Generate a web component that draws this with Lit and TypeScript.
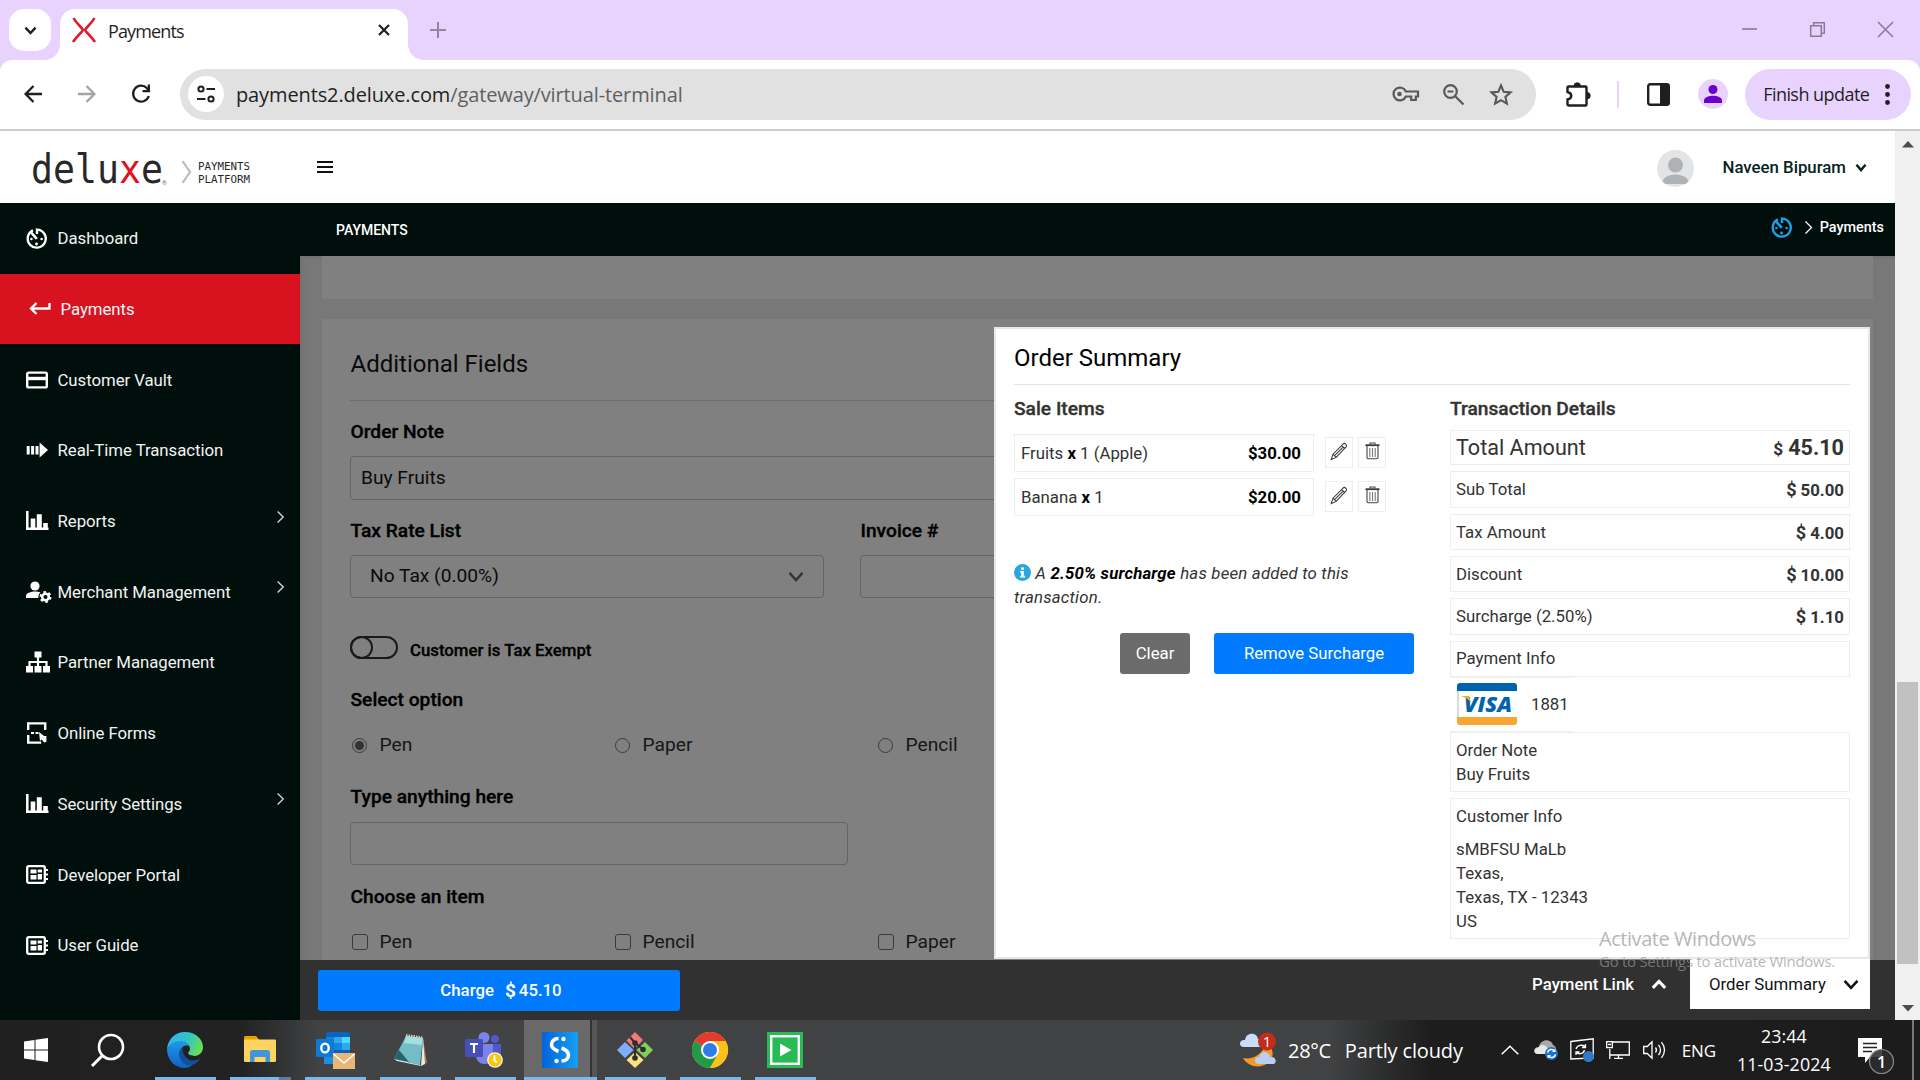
import { LitElement, html, css, svg, nothing } from "lit";
import { customElement } from "lit/decorators.js";
import { classMap } from "lit/directives/class-map.js";

const icon = (cls: string, w: number, h: number, body: unknown) =>
  html`<svg class=${cls} width=${w} height=${h} viewBox="0 0 ${w} ${h}" fill="none">${body}</svg>`;

const gauge = svg`<path d="M7 2.400A9 9 0 1 0 11 1.600V6" stroke="currentColor" stroke-width="2.400"/><path d="M4.800 4.200 10.800 10.800" stroke="currentColor" stroke-width="2.600"/><circle cx="5.400" cy="11" r="1.300" fill="currentColor"/><circle cx="15.600" cy="11" r="1.300" fill="currentColor"/><circle cx="10.500" cy="16" r="1.400" fill="currentColor"/>`;
const bars = svg`<path d="M1.300 0V19M0 17.800H22.500" stroke="currentColor" stroke-width="2.500"/><path d="M4.700 7.500h4.600V18H4.700zM10.800 3.200h5V18h-5zM17.200 12h4.600v6h-4.600z" fill="currentColor"/>`;
const board = svg`<rect x="1.200" y="1.200" width="17.600" height="16.600" rx="1.500" stroke="currentColor" stroke-width="2.300"/><path d="M4.500 4.500h6v4h-6zM4.500 10h6v4.500h-6zM11.700 4.500h4.300v3h-4.300zM11.700 9h4.300v5.500h-4.300z" fill="currentColor"/><path d="M19 5h3M19 9.500h3M19 14h3" stroke="currentColor" stroke-width="2.200"/>`;

const NAV = [
  { label: "Dashboard", art: icon("ni", 21, 21, gauge) },
  { label: "Payments", active: true, art: icon("ni", 22, 14, svg`<path d="M20.500 1v5.500H2M7.500 1 2 6.500 7.500 12" stroke="currentColor" stroke-width="2.300"/>`) },
  { label: "Customer Vault", art: icon("ni", 22, 18, svg`<rect x="1.200" y="1.600" width="19.600" height="14.800" rx="1.500" stroke="currentColor" stroke-width="2.400"/><path d="M1 5.800h20v3.400H1z" fill="currentColor"/>`) },
  { label: "Real-Time Transaction", art: icon("ni", 22, 16, svg`<path d="M2.200 4v8.500M6.600 4v8.500M11 4v8.500" stroke="currentColor" stroke-width="3"/><path d="M13.600.5 22 8l-8.400 7.500z" fill="currentColor"/>`) },
  { label: "Reports", more: true, art: icon("ni", 22, 20, bars) },
  { label: "Merchant Management", more: true, art: icon("ni", 26, 22, svg`<circle cx="9" cy="5" r="4.600" fill="currentColor"/><path d="M0 17v-2c0-3 5-4.500 9-4.500 2 0 4 .4 5.500 1-1.800 1.400-2.500 3.500-2 5.500z" fill="currentColor"/><circle cx="19.500" cy="16" r="3.300" stroke="currentColor" stroke-width="2.500"/><circle cx="19.500" cy="16" r="5" stroke="currentColor" stroke-width="2" stroke-dasharray="2.600 2.600"/>`) },
  { label: "Partner Management", art: icon("ni", 24, 22, svg`<path d="M8.500.5h7v6h-7zM0 15h7v6.500H0zM8.500 15h7v6.500h-7zM17 15h7v6.500h-7z" fill="currentColor"/><path d="M12 6v10M3.500 16v-5h17v5" stroke="currentColor" stroke-width="2.200"/>`) },
  { label: "Online Forms", art: icon("ni", 22, 22, svg`<path d="M2.200 8V1.400h17V8M2.200 13v7.600h13M19.200 14v6" stroke="currentColor" stroke-width="2.400"/><path d="M5 11h3M9.500 11h3" stroke="currentColor" stroke-width="2"/><path d="m13 10 7 5.500-2.600.4 2.800 3.200-1.800 1.700-2.800-3.400L14 19z" fill="currentColor"/>`) },
  { label: "Security Settings", more: true, art: icon("ni", 22, 20, bars) },
  { label: "Developer Portal", art: icon("ni", 22, 19, board) },
  { label: "User Guide", art: icon("ni", 22, 19, board) },
];

const chev = (cls: string, w: number, h: number, sw: number) =>
  icon(cls, w, h, svg`<path d="M${sw * 0.6} ${sw * 0.7} ${w / 2} ${h - sw * 0.8} ${w - sw * 0.6} ${sw * 0.7}" stroke="currentColor" stroke-width=${sw}/>`);

const pencil = icon("", 18, 19, svg`<path d="M1.200 17.500 3 12.200 13.300 1.800c1.200-1.200 4.200 1.300 3 2.800L6.200 15.400zM3 12.200l3.200 3.200M11.600 3.600l3.200 3M4.600 13.600 13.400 4.800" stroke="#383838" stroke-width="1.050"/>`);
const trash = icon("", 15, 18, svg`<path d="M.5 3.200h14" stroke="#3a3a3a" stroke-width="1.800"/><path d="M5 2.400V1h5v1.400M2 4v11.500c0 .8.500 1.200 1.200 1.200h8.600c.7 0 1.200-.4 1.200-1.200V4" stroke="#444" stroke-width="1.100"/><path d="M4.800 6v9M7.500 6v9M10.200 6v9" stroke="#777" stroke-width="1.100"/>`);

const TOTALS = [
  { label: "Total Amount", value: "45.10", cls: "t0" },
  { label: "Sub Total", value: "50.00", cls: "t1" },
  { label: "Tax Amount", value: "4.00", cls: "t2" },
  { label: "Discount", value: "10.00", cls: "t2" },
  { label: "Surcharge (2.50%)", value: "1.10", cls: "t1" },
];

const APPS = [
  { art: icon("", 36, 36, svg`<defs><linearGradient id="ea" x1="0" y1=".3" x2="1" y2=".6"><stop offset="0" stop-color="#35b5ee"/><stop offset=".5" stop-color="#2fc3c9"/><stop offset="1" stop-color="#6ce04c"/></linearGradient><linearGradient id="eb" x1="0" y1="0" x2="0" y2="1"><stop offset="0" stop-color="#1f9ae8"/><stop offset="1" stop-color="#0f62c4"/></linearGradient></defs><path d="M0 17C1 7 8 0 18 0c11 0 18 7.500 18 15 0 5.500-4 9-8.500 9-4 0-6.300-1.500-6.300-2.900 0-1 1.800-1.700 1.800-4.600 0-3-3-5.500-7-5.500-7 0-13 3-16 6z" fill="url(#ea)"/><path d="M0 17c2-5 7-8 13-8 4.500 0 8 1.500 9.500 5-6-2-10 2.500-9 8 1 6.500 6 10 12 11-2.500 2-5 3-8 3C8 36 0 28 0 17z" fill="url(#eb)"/><path d="M16 15c-4.500 2-5 8-2.500 12.500C16 32 21 34.500 26 32.800c3-1.100 5.500-3.300 7.200-6C30 28.500 25 29.500 21 27c-4-2.500-6-7-5-12z" fill="#124f9c"/>`) },
  { art: icon("", 32, 30, svg`<path d="M0 2.500C0 1.700.6 1 1.400 1H12l3 3.500V8H0z" fill="#e8a200"/><rect y="4.500" width="32" height="22.500" rx="1.200" fill="#ffd35e"/><path d="M6 27V17.500c0-1.500 1-2.500 2.500-2.500h15c1.500 0 2.500 1 2.500 2.500V27h-4.500v-5h-11v5z" fill="#3e96df"/>`), cls: "split" },
  { art: icon("", 39, 37, svg`<rect x="10" y="0" width="24" height="32" rx="2" fill="#0a63bd"/><path d="M10 5h8v6h-8z" fill="#1384dc"/><path d="M18 5h8v6h-8z" fill="#2fa9ee"/><path d="M26 5h8v6h-8z" fill="#4fd8ff"/><path d="M18 11h8v7h-8z" fill="#1684dc"/><path d="M26 11h8v7h-8z" fill="#2ea8ee"/><path d="M8 22h12v10H8z" fill="#1a8fe0"/><rect y="7" width="18" height="18" rx="1.500" fill="#0f7ad4"/><ellipse cx="9" cy="16" rx="3.700" ry="4.400" stroke="#fff" stroke-width="2.400"/><path d="M17 21h22v16H17z" fill="#eab676"/><path d="m17.500 22 10.500 9 10.500-9" stroke="#fff" stroke-width="1.600"/>`) },
  { art: icon("", 33, 33, svg`<path d="m29 4 4 25-4 1z" fill="#b07a3a"/><path d="M29 4 31 30l-4 2z" fill="#e6ecee"/><path d="M12 2 29 4l-3 27L0 25z" fill="#74bcc6"/><path d="M12 2 29 4l-1 7-18-2z" fill="#a5dfe4"/><path d="M5 16 0 25l15 3z" fill="#27636c"/><path d="M0 25l26 6 1 1-24-5z" fill="#dfe8ea"/><path d="M12 1.500 29 4" stroke="#ccc" stroke-width="3" stroke-dasharray="1.500 1"/>`) },
  { art: icon("", 40, 36, svg`<circle cx="19" cy="5.500" r="5.500" fill="#7b83eb"/><circle cx="30" cy="7" r="4" fill="#5059c9"/><path d="M24 12h12v8c0 5-4 7-7 7z" fill="#5059c9"/><path d="M11 12h17v11c0 6-4 9-8.500 9S11 29 11 23z" fill="#7b83eb"/><rect y="7" width="18" height="18" rx="1.500" fill="#464eb8"/><path d="M5 12h8M9 12v9" stroke="#fff" stroke-width="2.200"/><circle cx="30" cy="28" r="7.800" fill="#fff"/><circle cx="30" cy="28" r="6.700" fill="#f9c80e"/><path d="M29.500 23.500v5l2.500 2" stroke="#fff" stroke-width="2"/>`) },
  { art: icon("", 36, 36, svg`<defs><linearGradient id="sa" x1="0" y1="0" x2="1" y2="0"><stop offset="0" stop-color="#0163dc"/><stop offset="1" stop-color="#16a0f0"/></linearGradient></defs><path d="M0 0h36v36H0z" fill="url(#sa)"/><path d="M16.500 6.500c-4.500 0-7 3-7 6s2 5 7 7M19.500 16c5 2 7 4 7 7s-2.500 6-7 6" stroke="#fff" stroke-width="3.600"/><circle cx="21.500" cy="7" r="2.200" fill="#fff"/><circle cx="14.500" cy="29" r="2.200" fill="#fff"/>`), cls: "current" },
  { art: icon("", 36, 36, svg`<path d="m18 0 8 8-8.500 9L9.500 8.500z" fill="#f4797b"/><path d="m28 10 8 8-8 8-8.500-8z" fill="#82cf5c"/><path d="m8 10 8.500 8L8 26l-8-8z" fill="#7cb0fb"/><path d="m18 20 8.500 8L18 36l-8.500-8z" fill="#fbe27c"/><path d="M13 5l5 6v15M18 11l9 7" stroke="#2c2f31" stroke-width="2"/><circle cx="18" cy="11" r="2.800" fill="#2c2f31"/><circle cx="26" cy="17.500" r="2.800" fill="#2c2f31"/><circle cx="18" cy="26" r="2.800" fill="#2c2f31"/>`) },
  { art: icon("", 36, 36, svg`<circle cx="18" cy="18" r="18" fill="#fbc116"/><path d="M18 18 2.400 9A18 18 0 0 1 33.600 9H18z" fill="#e33b2e"/><path d="M2.400 9A18 18 0 0 0 18 36l7.800-13.500L18 18z" fill="#229a49"/><path d="M33.600 9H18v9l7.800 4.500L18 36A18 18 0 0 0 33.600 9z" fill="#fcc21b"/><circle cx="18" cy="18" r="9" fill="#fff"/><circle cx="18" cy="18" r="7" fill="#2f7bea"/>`) },
  { art: icon("", 36, 36, svg`<path d="M0 0h36v36H0z" fill="#27bb53"/><rect x="4.200" y="4.200" width="27.600" height="27.600" stroke="#fff" stroke-width="2.400"/><path d="M13 11.500 24.500 18 13 24.500z" fill="#fff"/>`) },
];

@customElement("app-root")
export class AppRoot extends LitElement {
  static styles = css`
    :host { display: block; width: 1920px; height: 1080px; overflow: hidden; position: relative; background: #fff; color: #333; font-family: Roboto, "Liberation Sans", sans-serif; font-size: 16.800px; }
    * { box-sizing: border-box; }
    svg { display: block; flex: none; overflow: visible; }
    .ui { font-family: "Open Sans", "Noto Sans", sans-serif; white-space: nowrap; }
    .tabs { height: 60px; background: #e8d3ff; display: flex; align-items: flex-start; padding: 9px 0 0 9px; color: #1f1f1f; }
    .search { width: 42px; height: 42px; border-radius: 15px; background: #fff; display: flex; align-items: center; justify-content: center; margin-right: 9px; }
    .tab { width: 348px; height: 51px; background: #fff; border-radius: 15px 15px 0 0; padding: 0 18px 10px 12px; display: flex; align-items: center; position: relative; }
    .tab::before, .tab::after { content: ""; position: absolute; bottom: 0; width: 15px; height: 15px; }
    .tab::before { left: -15px; background: radial-gradient(circle at 0 0, transparent 14.5px, #fff 15px); }
    .tab::after { right: -15px; background: radial-gradient(circle at 100% 0, transparent 14.5px, #fff 15px); }
    .tab .name { margin-left: 12px; flex: 1; font-size: 18px; letter-spacing: -.86px; padding-top: 2px; }
    .plus { margin: 13px 0 0 22px; }
    .win { margin: 13px 27px 0 auto; display: flex; gap: 53px; color: #857b92; }
    .corners { background: #e8d3ff; }
    .tools { height: 71px; background: #fff; border-bottom: 2px solid #ccc; border-radius: 12px 12px 0 0; display: flex; align-items: center; padding: 0 9px 1px 24px; color: #1f1f1f; }
    .fwd { margin-left: 36px; color: #a3a3a3; }
    .rel { margin-left: 35px; }
    .omni { margin-left: 29px; width: 1358px; height: 51px; border-radius: 26px; background: #e1e1e1; display: flex; align-items: center; padding-left: 8px; }
    .site-info { width: 36px; height: 36px; border-radius: 50%; background: #fff; display: flex; align-items: center; justify-content: center; }
    .url { margin-left: 12px; font-size: 20px; letter-spacing: -.12px; flex: 1; }
    .url i { font-style: normal; color: #5f6062; }
    .omni svg.o { color: #57585a; }
    .o2 { margin-left: 24px; }
    .o3 { margin: 0 23px 0 25px; }
    .ext { margin-left: 30px; }
    .sep { width: 2px; height: 27px; background: #e8d3ff; margin-left: 26px; }
    .side { margin-left: 28px; }
    .me { width: 30px; height: 30px; border-radius: 50%; background: #e8d3ff; margin-left: 28px; display: flex; justify-content: center; align-items: center; }
    .finish { margin-left: 17px; width: 166px; height: 51px; border-radius: 26px; background: #e8d3ff; display: flex; align-items: center; justify-content: space-between; padding: 0 21px 0 18px; font-size: 18px; letter-spacing: -.55px; }
    .page { display: flex; height: 889px; position: relative; }
    .site { width: 1895px; }
    .head { height: 72px; display: flex; align-items: center; padding-left: 31px; }
    .logo { font-family: "DejaVu Sans Mono", monospace; font-size: 36.500px; line-height: 40px; height: 40px; color: #26282a; transform: scaleY(1.1); margin-top: 5px; width: 131px; }
    .logo b { font-weight: 400; color: #df1021; }
    .reg { font-size: 6px; color: #666; margin-top: 30px; width: 5px; }
    .ang { margin: 9px 0 0 14px; }
    .plat { font-family: "DejaVu Sans Mono", monospace; font-size: 10.800px; line-height: 13px; color: #26282a; margin: 11px 0 0 6px; width: 119px; }
    .avatar { margin-left: auto; margin-top: 2px; }
    .user { margin-left: 29px; font-size: 16.800px; font-weight: 500; color: #06231d; display: flex; align-items: center; gap: 9px; margin-right: 28px; }
    .body { display: flex; height: 817px; }
    .nav { width: 300px; background: #000f0b; color: #fff; }
    .nav div { height: 70.7px; display: flex; align-items: center; padding: 0 16px 0 25.5px; font-size: 16.800px; letter-spacing: -.05px; }
    .nav div.active { background: #d71320; padding-left: 28.5px; }
    .nav .slot { width: 32px; }
    .nav .lbl { flex: 1; color: #f2f3f3; }
    .nav .go { margin-bottom: 9px; }
    .main { width: 1595px; }
    .crumb { height: 53px; background: #000f0b; color: #fff; display: flex; align-items: center; padding: 0 11px 0 36px; font-size: 14.400px; font-weight: 500; }
    .crumb .ttl { flex: 1; font-size: 14px; padding-top: 1px; }
    .crumb .g { color: #1da0e8; margin-bottom: 5px; }
    .crumb .c { margin: 0 8px 5px 13px; }
    .crumb .p { margin-bottom: 5px; }
    .content { height: 704px; background: #787878; overflow: hidden; padding-left: 22px; box-shadow: inset 6px 0 5px -4px #6f6f6f, inset 0 3px 3px -2px #707070; }
    .prev { width: 1551px; height: 43px; background: #808080; margin-bottom: 20px; }
    .card { width: 1551px; height: 700px; background: #808080; padding: 9px 28px 0; color: #000; }
    .h { height: 72px; line-height: 72px; font-size: 24px; color: #0a0a0a; padding-left: .5px; }
    .hr { height: 1px; background: #6e6e6e; }
    .l { font-size: 19.200px; font-weight: 500; line-height: 55px; height: 55px; padding: 3px 0 0 .5px; -webkit-text-stroke: .35px #000; }
    .l2 { height: 41px; line-height: 41px; margin-top: 20px; padding-top: 0; }
    .l3 { height: 52px; line-height: 52px; padding-top: 1px; }
    .l4 { height: 63px; line-height: 63px; padding-top: 0; }
    .in { border: 1px solid #646464; border-radius: 4px; height: 44px; line-height: 41px; font-size: 19.200px; padding-left: 10px; color: #0a0a0a; }
    .s { height: 43px; }
    .short { width: 498px; }
    .cols { display: grid; grid-template-columns: 474px 474px; column-gap: 36px; }
    .sel { display: flex; align-items: center; justify-content: space-between; padding: 0 19px 3px 19px; }
    .sel svg { color: #333; margin-top: 3px; }
    .tog { height: 23px; margin-top: 38px; display: flex; align-items: center; gap: 12px; font-size: 16.800px; font-weight: 500; -webkit-text-stroke: .3px #000; }
    .switch { width: 48px; height: 23px; border: 2px solid #1a1a1a; border-radius: 12px; }
    .knob { width: 23px; height: 23px; margin: -2px; border: 2px solid #1a1a1a; border-radius: 50%; }
    .tog span { padding-top: 5px; }
    .opts { display: grid; grid-template-columns: 263px 263px 263px; color: #161616; font-size: 19.200px; align-items: center; }
    .o-r { height: 50px; padding-bottom: 1px; }
    .o-c { height: 26px; }
    .opts div { display: flex; align-items: center; gap: 12.5px; padding-left: 2px; }
    .radio { width: 15px; height: 15px; border: 1.5px solid #3b3b3b; border-radius: 50%; display: flex; align-items: center; justify-content: center; margin-top: 2px; }
    .radio.on::after { content: ""; width: 9px; height: 9px; border-radius: 50%; background: #303438; }
    .box { width: 16px; height: 16px; border: 1.5px solid #3b3b3b; border-radius: 3px; margin: 1px -1px 0 0; }
    .foot { height: 60px; background: #313131; display: flex; align-items: flex-start; padding-left: 18px; color: #fff; font-weight: 500; }
    .charge { margin-top: 10px; width: 362px; height: 41px; border-radius: 3px; background: #007bff; display: flex; align-items: center; justify-content: center; font-size: 16.800px; padding-left: 4px; padding-bottom: 1px; }
    .charge b { margin: 0 3px 0 11px; font-size: 19px; }
    .plink { margin-left: auto; height: 48px; display: flex; align-items: center; gap: 17px; margin-right: 23px; font-size: 16.800px; }
    .osum { width: 180px; height: 50px; margin-top: -1px; margin-right: 25px; background: #fff; color: #111; display: flex; align-items: center; justify-content: space-between; padding: 0 11px 0 19px; font-size: 16.800px; font-weight: 400; }
    .up { transform: rotate(180deg); }
    .scroll { width: 25px; background: #f0f0f0; display: flex; flex-direction: column; align-items: center; padding: 10px 0 8px; }
    .thumb { width: 21px; height: 282px; background: #c1c1c1; margin: 534px 0 auto; }
    .modal { position: absolute; left: 994px; top: 196px; width: 876px; height: 632px; background: #fff; border: 2px solid #e4e9ee; padding: 0 18px; }
    .modal h2 { margin: 0; font-size: 24px; font-weight: 400; color: #000; height: 56px; line-height: 58px; border-bottom: 1px solid #e3e3e3; }
    .split { display: flex; }
    .left { width: 436px; }
    .right { width: 400px; }
    h3 { margin: 0; font-size: 19.200px; line-height: 45px; height: 45px; padding-top: 1px; font-weight: 500; color: #333; -webkit-text-stroke: .35px #333; }
    .left h3 { height: 49px; }
    .item { display: flex; align-items: center; height: 38px; margin-bottom: 6px; }
    .cell { width: 300px; height: 38px; border: 1px solid #ededed; padding: 0 12px 0 6px; display: flex; justify-content: space-between; align-items: center; margin-right: 11px; }
    .cell b, .note b { color: #000; }
    .act { width: 28px; height: 31px; border: 1px solid #ededed; margin: 0 5px 1px 0; display: flex; align-items: center; justify-content: center; }
    .act svg { margin-bottom: 3px; }
    .note { margin: 44px 0 0; width: 370px; font-style: italic; line-height: 24px; padding-top: 1px; letter-spacing: .2px; }
    .note svg { display: inline-block; vertical-align: -2px; }
    .btns { display: flex; gap: 24px; margin: 24px 0 0 106px; color: #fff; }
    .btns div { height: 41px; border-radius: 3px; display: flex; align-items: center; justify-content: center; padding-bottom: 1px; }
    .clear { width: 70px; background: #6b6b6b; }
    .rem { width: 200px; background: #007bff; }
    .t { border: 1px solid #ededed; padding: 0 5px; display: flex; align-items: center; justify-content: space-between; margin-bottom: 6px; }
    .t b { font-weight: 700; }
    .t i { font-style: normal; font-size: 1.080em; margin-right: 4px; }
    .t0 { height: 35px; font-size: 21.600px; }
    .t0 i { font-size: .8em; margin-right: 5px; }
    .t1 { height: 37px; padding-bottom: 1px; }
    .t2 { height: 36px; }
    .t.pay { height: 36px; margin: 0; padding-bottom: 2px; }
    .card-row { height: 55px; width: 124px; display: flex; align-items: center; gap: 14px; padding: 0 0 1px 7px; border: 1px solid #f2f2f2; border-width: 1px 0; }
    .blk { border: 1px solid #ededed; padding: 5px 5px 0; line-height: 24px; height: 60px; margin-bottom: 6px; }
    .blk.c { height: 141px; margin: 0; }
    .blk.c p { margin: 9px 0 0; }
    .wm { position: absolute; left: 1599px; top: 923px; color: rgba(150,150,150,.7); line-height: 32px; font-size: 20px; letter-spacing: -.45px; }
    .wm div + div { font-size: 15px; letter-spacing: -.28px; line-height: 16px; margin-top: -2px; }
    .task { height: 60px; background: linear-gradient(90deg, #202020 0, #222 240px, #414344 320px, #404243 1330px, #1d1d1d 1430px, #1c1c1c); display: flex; align-items: flex-start; color: #fff; padding-left: 24px; }
    .task > svg { align-self: center; }
    .find { margin-left: 43px; }
    .apps { display: flex; gap: 14px; margin-left: 31px; }
    .app { width: 61px; height: 60px; border-bottom: 3px solid #76b9ed; display: flex; align-items: center; justify-content: center; padding: 3px 1px 0 0; }
    .app.split { border-image: linear-gradient(90deg, #76b9ed 77%, #587fa1 77%) 3; border-style: solid; border-width: 0 0 3px; }
    .app.current { width: 73px; margin: 0 -6px; background: linear-gradient(90deg, #696969 66px, #333 66px, #333 68px, #565656 68px); }
    .tray { display: flex; align-items: center; height: 60px; flex: 1; }
    .wico { margin-left: 424px; }
    .wx { margin-left: 12px; font-size: 20px; letter-spacing: -.3px; }
    .wx2 { margin-left: 14px; font-size: 20px; letter-spacing: -.15px; }
    .k1 { margin-left: 38px; }
    .k2 { margin-left: 15px; }
    .k3, .k4 { margin-left: 12px; }
    .k5 { margin-left: 13px; }
    .eng { margin-left: 17px; font-size: 17px; letter-spacing: -.2px; width: 36px; }
    .clock { margin-left: 16px; width: 100px; text-align: center; font-size: 17.800px; line-height: 28px; letter-spacing: .1px; }
    .note-i { margin: 12px 0 0 24px; }
    .edge { width: 2px; height: 60px; background: #777; margin-left: 18px; }
  `;

  render() {
    return html`
      <div class="tabs">
        <div class="search">${chev("", 13, 9, 2.4)}</div>
        <div class="tab">
          ${icon("", 24, 24, svg`<path d="M1.500 0C5 6.500 10.800 10 10.800 12S5 17.500 1 24M22.500 0C19 6.500 13.200 10 13.200 12s5.800 5.500 9.800 12" stroke="#e01b2b" stroke-width="2.600"/>`)}
          <span class="name ui">Payments</span>
          ${icon("", 12, 12, svg`<path d="m1 1 10 10M11 1 1 11" stroke="#1f1f1f" stroke-width="2.200"/>`)}
        </div>
        ${icon("plus", 16, 16, svg`<path d="M8 0v16M0 8h16" stroke="#9086a0" stroke-width="2"/>`)}
        <div class="win">
          ${icon("", 15, 15, svg`<path d="M0 7h15" stroke="currentColor" stroke-width="1.600"/>`)}
          ${icon("", 15, 15, svg`<path d="M.7 3.700h10.600v10.600H.7zM3.700 3.500V.7h10.600v10.600h-2.800" stroke="currentColor" stroke-width="1.500"/>`)}
          ${icon("", 15, 15, svg`<path d="m0 0 15 15M15 0 0 15" stroke="currentColor" stroke-width="1.500"/>`)}
        </div>
      </div>
      <div class="corners"><div class="tools">
        ${icon("", 18, 18, svg`<path d="M18 9H2M9.500 1 1.600 9l7.900 8" stroke="currentColor" stroke-width="2.300"/>`)}
        ${icon("fwd", 18, 18, svg`<path d="M0 9h16M8.500 1l7.900 8-7.900 8" stroke="currentColor" stroke-width="2.300"/>`)}
        ${icon("rel", 20, 20, svg`<path d="M17.800 12A8 8 0 1 1 16 4.200L18 7" stroke="currentColor" stroke-width="2.300"/><path d="M19 .5V8.300h-7.500V6H16.700V.5z" fill="currentColor"/>`)}
        <div class="omni">
          <div class="site-info">${icon("", 18, 18, svg`<circle cx="4" cy="4" r="2.600" stroke="currentColor" stroke-width="2"/><circle cx="14" cy="14" r="2.600" stroke="currentColor" stroke-width="2"/><path d="M9.500 4H18M0 14h8.500" stroke="currentColor" stroke-width="2.200"/>`)}</div>
          <span class="url ui">payments2.deluxe.com<i>/gateway/virtual-terminal</i></span>
          ${icon("o", 27, 16, svg`<path d="M13.800 5.500H26v5h-2.200V14h-4.600v-3.500h-5.400a6.400 6.400 0 1 1 0-5z" stroke="currentColor" stroke-width="2.200"/><circle cx="7.500" cy="8" r="2.300" fill="currentColor"/>`)}
          ${icon("o o2", 21, 21, svg`<circle cx="7.500" cy="7.500" r="6.300" stroke="currentColor" stroke-width="2.200"/><path d="m12 12 8.500 8.500M4.500 7.500h6" stroke="currentColor" stroke-width="2.200"/>`)}
          ${icon("o o3", 24, 23, svg`<path d="m12 2.500 2.700 6.300 6.800.6-5.100 4.500 1.500 6.700L12 17.100l-5.900 3.500 1.500-6.700-5.100-4.500 6.800-.6z" stroke="currentColor" stroke-width="2.100"/>`)}
        </div>
        ${icon("ext", 25, 25, svg`<path d="M2.500 4.500H19.500q1 0 1 1V22q0 1.500-1 1.500H3q-1.500 0-1.500-1.500v-4.500c5-1 5-6.500 0-7.500V6q0-1.500 1-1.500z" stroke="currentColor" stroke-width="2.400"/><path d="M8 4a3.200 3.200 0 0 1 6.400 0zM21 10.500a3.200 3.200 0 0 1 0 6.400z" fill="currentColor" stroke="currentColor"/>`)}
        <div class="sep"></div>
        ${icon("side", 23, 23, svg`<rect x="1.200" y="1.200" width="20.600" height="20.600" rx="2" stroke="currentColor" stroke-width="2.400"/><path d="M13 1h9v21h-9z" fill="currentColor"/>`)}
        <div class="me">${icon("", 18, 18, svg`<circle cx="9" cy="4.500" r="4.500" fill="#6a00d0"/><path d="M0 18v-2.500C0 12 6 10.800 9 10.800s9 1.200 9 4.700V18z" fill="#6a00d0"/>`)}</div>
        <div class="finish ui"><span>Finish update</span>${icon("", 5, 21, svg`<circle cx="2.500" cy="2.500" r="2.400" fill="currentColor"/><circle cx="2.500" cy="10.500" r="2.400" fill="currentColor"/><circle cx="2.500" cy="18.500" r="2.400" fill="currentColor"/>`)}</div>
      </div></div>
      <div class="page">
        <div class="site">
          <div class="head">
            <div class="logo">delu<b>x</b>e</div><span class="reg">®</span>
            ${icon("ang", 11, 22, svg`<path d="M1.500 0 9 11 1.500 22" stroke="#b9bbbc" stroke-width="2.200"/>`)}
            <div class="plat">PAYMENTS<br />PLATFORM</div>
            ${icon("", 16, 14, svg`<path d="M0 2h16M0 7h16M0 12h16" stroke="#111" stroke-width="2"/>`)}
            ${icon("avatar", 37, 37, svg`<defs><clipPath id="av"><circle cx="18.500" cy="18.500" r="18.500"/></clipPath></defs><g clip-path="url(#av)"><path d="M0 0h37v37H0z" fill="#e2e4e6"/><circle cx="18.500" cy="15" r="7.500" fill="#adb2b7"/><path d="M5 34c0-6 6-9.500 13.500-9.500S32 28 32 34z" fill="#adb2b7"/></g>`)}
            <div class="user">Naveen Bipuram ${chev("", 12, 9, 2.5)}</div>
          </div>
          <div class="body">
            <div class="nav">
              ${NAV.map((n) => html`<div class=${classMap({ active: !!n.active })}><span class="slot">${n.art}</span><span class="lbl">${n.label}</span>${n.more ? icon("go", 7, 12, svg`<path d="m.6.600 5.600 5.400L.6 11.400" stroke="#cfd3d2" stroke-width="1.400"/>`) : nothing}</div>`)}
            </div>
            <div class="main">
              <div class="crumb"><span class="ttl">PAYMENTS</span>${icon("g", 21, 21, gauge)}${icon("c", 7, 13, svg`<path d="m.5.500 6 6-6 6" stroke="#fff" stroke-width="1.300"/>`)}<span class="p">Payments</span></div>
              <div class="content">
                <div class="prev"></div>
                <div class="card">
                  <div class="h">Additional Fields</div>
                  <div class="hr"></div>
                  <div class="l">Order Note</div>
                  <div class="in">Buy Fruits</div>
                  <div class="cols">
                    <div><div class="l">Tax Rate List</div><div class="in s sel"><span>No Tax (0.00%)</span>${chev("", 16, 11, 2.4)}</div></div>
                    <div><div class="l">Invoice #</div><div class="in s"></div></div>
                  </div>
                  <div class="tog"><div class="switch"><div class="knob"></div></div><span>Customer is Tax Exempt</span></div>
                  <div class="l l2">Select option</div>
                  <div class="opts o-r">${["Pen", "Paper", "Pencil"].map((t, i) => html`<div><span class=${classMap({ radio: true, on: i === 0 })}></span>${t}</div>`)}</div>
                  <div class="l l3">Type anything here</div>
                  <div class="in s short"></div>
                  <div class="l l4">Choose an item</div>
                  <div class="opts o-c">${["Pen", "Pencil", "Paper"].map((t) => html`<div><span class="box"></span>${t}</div>`)}</div>
                </div>
              </div>
              <div class="foot">
                <div class="charge">Charge <b>$</b>45.10</div>
                <div class="plink">Payment Link ${chev("up", 16, 11, 3)}</div>
                <div class="osum">Order Summary ${chev("", 16, 11, 2.6)}</div>
              </div>
            </div>
          </div>
        </div>
        <div class="scroll">
          ${icon("", 12, 7, svg`<path d="M6 0l6 6.500H0z" fill="#4c4c4c"/>`)}
          <div class="thumb"></div>
          ${icon("", 12, 7, svg`<path d="M6 6.500 0 0h12z" fill="#4c4c4c"/>`)}
        </div>
        <div class="modal">
          <h2>Order Summary</h2>
          <div class="split">
            <div class="left">
              <h3>Sale Items</h3>
              <div class="item"><div class="cell"><span>Fruits <b>x</b> 1 (Apple)</span><b>$30.00</b></div><div class="act">${pencil}</div><div class="act">${trash}</div></div>
              <div class="item"><div class="cell"><span>Banana <b>x</b> 1</span><b>$20.00</b></div><div class="act">${pencil}</div><div class="act">${trash}</div></div>
              <div class="note">${icon("", 17, 17, svg`<circle cx="8.500" cy="8.500" r="8.500" fill="#2ba6e0"/><path d="M7 3.500h3v2.200H7zM6.200 7h3.600v4.800h1.200v1.700H6.200v-1.700h1V8.700h-1z" fill="#fff"/>`)} A <b>2.50% surcharge</b> has been added to this transaction.</div>
              <div class="btns"><div class="clear">Clear</div><div class="rem">Remove Surcharge</div></div>
            </div>
            <div class="right">
              <h3>Transaction Details</h3>
              ${TOTALS.map((t) => html`<div class="t ${t.cls}"><span>${t.label}</span><b><i>$</i>${t.value}</b></div>`)}
              <div class="t pay">Payment Info</div>
              <div class="card-row">
                ${icon("", 60, 42, svg`<rect width="60" height="42" rx="3" fill="#fff"/><path d="M0 8V3q0-3 3-3h54q3 0 3 3v5z" fill="#0063b0"/><path d="M0 34h60v5q0 3-3 3H3q-3 0-3-3z" fill="#f9a533"/><path d="M0 8h2v26H0z" fill="#d9d9d9"/><text x="7" y="28.500" textLength="48" lengthAdjust="spacingAndGlyphs" font-family="Open Sans, sans-serif" font-weight="800" font-style="italic" font-size="21.500" fill="#0063b0">VISA</text><path d="M4 13h8l2 6.500q-3-4.500-10-6.500z" fill="#f9a533"/>`)}
                <span>1881</span>
              </div>
              <div class="blk">Order Note<br />Buy Fruits</div>
              <div class="blk c">Customer Info<p>sMBFSU MaLb<br />Texas,<br />Texas, TX - 12343<br />US</p></div>
            </div>
          </div>
        </div>
      </div>
      <div class="task">
        ${icon("", 24, 24, svg`<path d="M0 3.500 10.500 2v9.500H0zM11.500 1.800 24 0v11.500H11.500zM0 12.500h10.500V22L0 20.500zM11.500 12.500H24V24l-12.500-1.800z" fill="#fff"/>`)}
        ${icon("find", 33, 33, svg`<circle cx="20" cy="13" r="12" stroke="#fff" stroke-width="2.600"/><path d="M11.500 21.500 1 32" stroke="#fff" stroke-width="3"/>`)}
        <div class="apps">${APPS.map((a) => html`<div class="app ${a.cls ?? ""}">${a.art}</div>`)}</div>
        <div class="tray">
          ${icon("wico", 36, 36, svg`<path d="M3 26c8 2 19-2 23-15 9 5 8 16 2 20-8 6-20 4-25-5z" fill="#f29a25"/><path d="M4 15c-6 0-5-8 1-7 1-8 12-8 13-1 5 0 5 8 1 8z" fill="#c9dcf8"/><path d="M19 32c-6 0-5-8 0-7 2-7 10-6 11 0 7-1 7 7 3 7z" fill="#b9d0f5"/><circle cx="27" cy="9.500" r="9" fill="#c42b1c"/><text x="27" y="15" text-anchor="middle" font-family="Open Sans, sans-serif" font-size="15" fill="#fff">1</text>`)}
          <span class="wx ui">28°C</span><span class="wx2 ui">Partly cloudy</span>
          ${icon("k1", 18, 10, svg`<path d="m.7 9.300 8.300-8 8.300 8" stroke="#fff" stroke-width="1.500"/>`)}
          ${icon("k2", 24, 22, svg`<path d="M4 15c-6-1-4-8 1-7 1-8 12-9 14-2 4 1 4 8 1 9z" fill="#a9a9a9"/><path d="M3 15c-4-1-3-6 1-6 2-4 8-4 10 1v5z" fill="#e8e8e8"/><circle cx="17.500" cy="14.500" r="6.500" fill="#1b74c5"/><path d="M13.500 13.500a4 4 0 0 1 7-1.500M21.500 15.500a4 4 0 0 1-7 1.500" stroke="#fff" stroke-width="1.500"/><path d="M21.500 9.500v3.500H18zM13.500 19.500V16H17z" fill="#fff"/>`)}
          ${icon("k3", 24, 24, svg`<path d="M.8 3.500 23.200.8V20L.8 21z" stroke="#fff" stroke-width="1.300"/><path d="M6 11c1-4 7-5 9.500-2M15.500 6v3.500H12M14.500 12c-1 4-6 5-8.500 2M6 17v-3h3.500" stroke="#fff" stroke-width="1.300"/><circle cx="18.500" cy="18.500" r="5.500" fill="#2f7ac6"/>`)}
          ${icon("k4", 24, 18, svg`<path d="M6 1h17.300v13H3.800V8M3.800 8v10M8 17.300h9M12.500 14v3.500M.7.700h5.600v6H.7zM2 3.500h3" stroke="#fff" stroke-width="1.300"/>`)}
          ${icon("k5", 22, 18, svg`<path d="M.7 5.500h3.600L9 .8v16.400l-4.700-4.700H.7zM12.500 6.500q2 2.500 0 5M15.500 3.800q4 5.200 0 10.400M18.500 1.200q6 7.800 0 15.600" stroke="#fff" stroke-width="1.300"/>`)}
          <span class="eng ui">ENG</span>
          <div class="clock ui">23:44<br />11-03-2024</div>
          ${icon("note-i", 36, 36, svg`<path d="M0 0h24v19H12l-5 6v-6H0z" fill="#fff"/><path d="M5 5.500h14M5 9.500h14M5 13.500h9" stroke="#222" stroke-width="1.400"/><circle cx="23.500" cy="23.500" r="12" fill="#2c2c2c" fill-opacity=".88" stroke="#8a8a8a" stroke-width="1.200"/><text x="23.500" y="29.500" text-anchor="middle" font-family="Open Sans, sans-serif" font-weight="600" font-size="16" fill="#fff">1</text>`)}
          <span class="edge"></span>
        </div>
      </div>
      <div class="wm ui"><div>Activate Windows</div><div>Go to Settings to activate Windows.</div></div>
    `;
  }
}
